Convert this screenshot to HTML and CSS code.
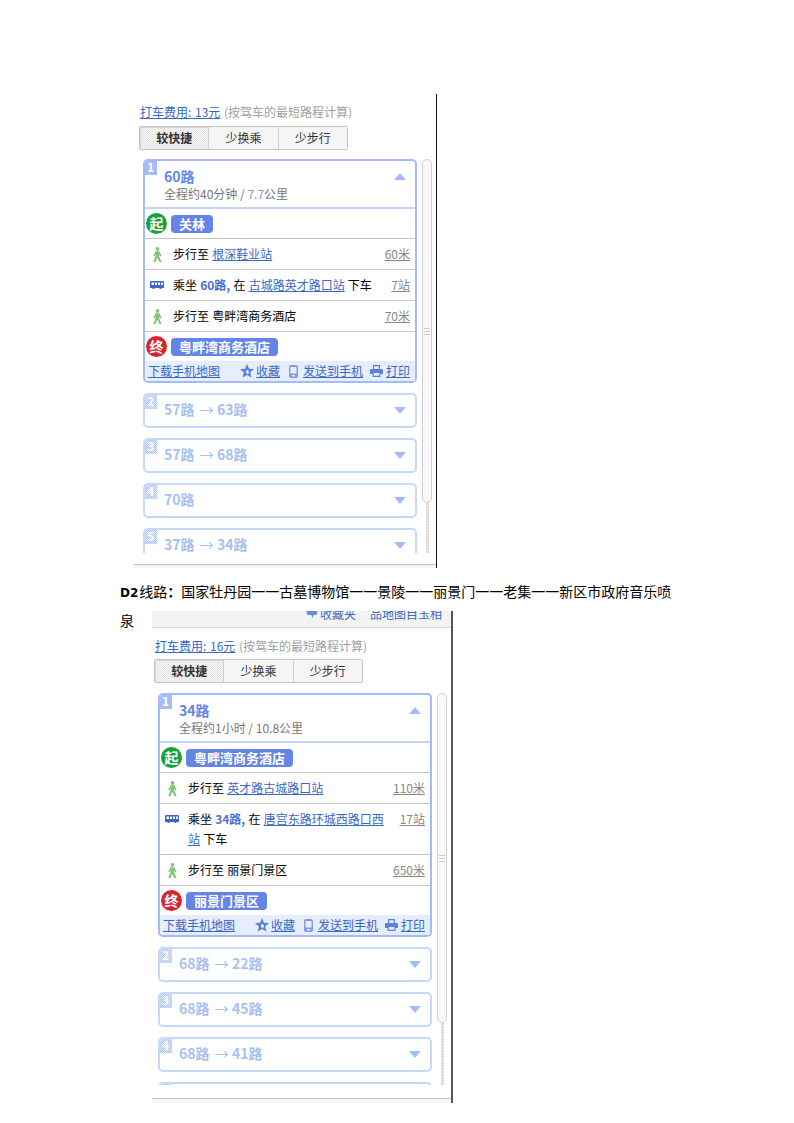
FILE: index.html
```html
<!DOCTYPE html>
<html lang="zh">
<head>
<meta charset="utf-8">
<title>公交线路</title>
<link rel="stylesheet" href="styles.css">
</head>
<body>
<svg class="defs" aria-hidden="true">
  <symbol id="walk" viewBox="0 0 12 16"><circle cx="6.5" cy="2" r="2"/><path d="M4.5 4.500h4l2.500 5-1.400.6L8.400 8v2.500L11 16H8.600L6.400 11.500 4.200 16H2l2.400-6V7.500L3.400 10 2 9.400z"/></symbol>
  <symbol id="bus" viewBox="0 0 14 9"><path fill-rule="evenodd" d="M1 0h12a1 1 0 0 1 1 1v6h-2.100a1.500 1.500 0 0 1-2.800 0H4.900a1.500 1.500 0 0 1-2.800 0H0V1a1 1 0 0 1 1-1zM1.500 1.500v2.500h2.500V1.500zM5 1.500v2.500h2V1.500zM8 1.500v2.500h2V1.500zM11 1.500v2.500h1.800V1.500z"/></symbol>
  <symbol id="star" viewBox="0 0 14 14"><path fill-rule="evenodd" d="M7 0l2 4.700 5 .4-3.800 3.300L11.400 13.500 7 10.900 2.600 13.500 3.800 8.400 0 5.100l5-.4zM7 5.500L5.800 8l1.200 2 1.600-.6L9 7.500z"/></symbol>
  <symbol id="phone" viewBox="0 0 9 13"><path fill-rule="evenodd" d="M2 0h5a2 2 0 0 1 2 2v9a2 2 0 0 1-2 2H2a2 2 0 0 1-2-2V2a2 2 0 0 1 2-2zM1.500 2v6.500h6V2zM3 10v1.500h3V10z"/></symbol>
  <symbol id="printer" viewBox="0 0 13 12"><path fill-rule="evenodd" d="M3 0h7v4h2a1 1 0 0 1 1 1v4h-2.500v3h-8V9H0V5a1 1 0 0 1 1-1h2zM4.200 1.200V4h4.600V1.200zM3.700 8v2.800h5.600V8z"/></symbol>
</svg>

<section class="panel panel-a">
  <div class="panel-body">
    <p class="fare"><a href="#">打车费用: 13元</a> <span class="fare-note">(按驾车的最短路程计算)</span></p>
    <div class="tabs"><span class="tab is-active">较快捷</span><span class="tab">少换乘</span><span class="tab">少步行</span></div>
    <div class="results">
      <div class="list">
        <article class="card is-open">
          <span class="num">1</span>
          <header class="card-head">
            <div>
              <h3 class="route">60路</h3>
              <p class="sum">全程约40分钟 / <span class="km">7.7</span>公里</p>
            </div>
            <i class="tri-up"></i>
          </header>
          <div class="stop"><span class="dot dot-start">起</span><span class="pill">关林</span></div>
          <div class="step"><span class="ico"><svg class="i-walk"><use href="#walk"/></svg></span><div class="step-main">步行至 <a href="#">根深鞋业站</a></div><a class="dist" href="#">60米</a></div>
          <div class="step"><span class="ico"><svg class="i-bus"><use href="#bus"/></svg></span><div class="step-main">乘坐 <b class="line">60路,</b> 在 <a href="#">古城路英才路口站</a> 下车</div><a class="dist" href="#">7站</a></div>
          <div class="step"><span class="ico"><svg class="i-walk"><use href="#walk"/></svg></span><div class="step-main">步行至 粤畔湾商务酒店</div><a class="dist" href="#">70米</a></div>
          <div class="stop stop-end"><span class="dot dot-end">终</span><span class="pill">粤畔湾商务酒店</span></div>
          <footer class="tools">
            <a href="#">下载手机地图</a>
            <span class="tool-group">
              <span class="tool"><svg class="i-star"><use href="#star"/></svg><a href="#">收藏</a></span>
              <span class="tool"><svg class="i-phone"><use href="#phone"/></svg><a href="#">发送到手机</a></span>
              <span class="tool"><svg class="i-printer"><use href="#printer"/></svg><a href="#">打印</a></span>
            </span>
          </footer>
        </article>
        <article class="card"><span class="num">2</span><h3 class="route">57路 <span class="arrow">→</span> 63路</h3><i class="tri-down"></i></article>
        <article class="card"><span class="num">3</span><h3 class="route">57路 <span class="arrow">→</span> 68路</h3><i class="tri-down"></i></article>
        <article class="card"><span class="num">4</span><h3 class="route">70路</h3><i class="tri-down"></i></article>
        <article class="card"><span class="num">5</span><h3 class="route">37路 <span class="arrow">→</span> 34路</h3><i class="tri-down"></i></article>
      </div>
      <div class="scroll"><div class="thumb"><i class="grip"></i></div><div class="track"></div></div>
    </div>
  </div>
  <div class="panel-foot"></div>
</section>

<p class="line-title"><b class="code">D2</b>线路<span class="colon">：</span>国家牡丹园一一古墓博物馆一一景陵一一丽景门一一老集一一新区市政府音乐喷泉</p>

<section class="panel panel-b">
  <div class="panel-head">
    <span class="head-link"><svg class="i-fav" viewBox="0 0 12 8"><path d="M0 0h12l-1.500 5H8L6 8 5.500 5h-4z"/></svg>收藏夹</span>
    <span class="head-link">品地图目玉相</span>
  </div>
  <div class="panel-body">
    <p class="fare"><a href="#">打车费用: 16元</a> <span class="fare-note">(按驾车的最短路程计算)</span></p>
    <div class="tabs"><span class="tab is-active">较快捷</span><span class="tab">少换乘</span><span class="tab">少步行</span></div>
    <div class="results">
      <div class="list">
        <article class="card is-open">
          <span class="num">1</span>
          <header class="card-head">
            <div>
              <h3 class="route">34路</h3>
              <p class="sum">全程约1小时 / 10.8公里</p>
            </div>
            <i class="tri-up"></i>
          </header>
          <div class="stop"><span class="dot dot-start">起</span><span class="pill">粤畔湾商务酒店</span></div>
          <div class="step"><span class="ico"><svg class="i-walk"><use href="#walk"/></svg></span><div class="step-main">步行至 <a href="#">英才路古城路口站</a></div><a class="dist" href="#">110米</a></div>
          <div class="step"><span class="ico"><svg class="i-bus"><use href="#bus"/></svg></span><div class="step-main">乘坐 <b class="line">34路,</b> 在 <a href="#">唐宫东路环城西路口西站</a> 下车</div><a class="dist" href="#">17站</a></div>
          <div class="step"><span class="ico"><svg class="i-walk"><use href="#walk"/></svg></span><div class="step-main">步行至 丽景门景区</div><a class="dist" href="#">650米</a></div>
          <div class="stop stop-end"><span class="dot dot-end">终</span><span class="pill">丽景门景区</span></div>
          <footer class="tools">
            <a href="#">下载手机地图</a>
            <span class="tool-group">
              <span class="tool"><svg class="i-star"><use href="#star"/></svg><a href="#">收藏</a></span>
              <span class="tool"><svg class="i-phone"><use href="#phone"/></svg><a href="#">发送到手机</a></span>
              <span class="tool"><svg class="i-printer"><use href="#printer"/></svg><a href="#">打印</a></span>
            </span>
          </footer>
        </article>
        <article class="card"><span class="num">2</span><h3 class="route">68路 <span class="arrow">→</span> 22路</h3><i class="tri-down"></i></article>
        <article class="card"><span class="num">3</span><h3 class="route">68路 <span class="arrow">→</span> 45路</h3><i class="tri-down"></i></article>
        <article class="card"><span class="num">4</span><h3 class="route">68路 <span class="arrow">→</span> 41路</h3><i class="tri-down"></i></article>
        <article class="card"><span class="num">5</span></article>
      </div>
      <div class="scroll"><div class="thumb"><i class="grip"></i></div><div class="track"></div></div>
    </div>
  </div>
  <div class="panel-foot"></div>
</section>
</body>
</html>
```
FILE: styles.css
```css
* { box-sizing: border-box; }
html, body { margin: 0; background: #fff; }
body {
  padding-top: 94px;
  font: 12px/20px "Noto Sans CJK SC", "Liberation Sans", sans-serif;
  color: #000;
}
h3, p { margin: 0; }
a { color: #3a68c6; text-decoration: underline; }
.defs { display: none; }

/* panels */
.panel { display: flex; flex-direction: column; overflow: hidden; }
.panel-a { margin-left: 134px; width: 303px; height: 474px; border-right: 1px solid #111; }
.panel-b { margin-left: 152px; width: 301px; height: 492px; border-right: 2px solid #555; }
.panel-body { padding-top: 10px; }
.panel-b .panel-body { margin-left: -3px; }
.panel-a .results { height: 394px; }
.panel-b .results { height: 392px; margin-top: 10px; }
.panel-b .tabs { margin-top: 5px; }
.panel-foot {
  margin-top: auto;
  height: 5px;
  border-top: 1px solid #c4c4c4;
  background: #f6f6f6;
}
.panel-a .panel-foot { height: 4px; }

.panel-head {
  height: 17px;
  flex: none;
  display: flex;
  justify-content: flex-end;
  align-items: flex-end;
  gap: 14px;
  padding: 0 9px 7px 0;
  overflow: hidden;
  background: conic-gradient(#efefef 25%, #f7f7f7 0 50%, #efefef 0 75%, #f7f7f7 0) 0 0 / 2px 2px;
  border-bottom: 1px solid #dcdcdc;
  color: #3a68c6;
}
.head-link { display: inline-flex; align-items: center; line-height: 12px; height: 12px; flex: none; }
.i-fav { width: 12px; height: 8px; margin-right: 2px; fill: #6a8ce0; }

/* fare */
.fare { padding-left: 6px; line-height: 16px; height: 16px; white-space: nowrap; word-spacing: 1px; }
.fare-note { color: #a0a0a0; }

/* tabs */
.tabs {
  display: flex;
  width: 209px;
  height: 24px;
  margin: 6px 0 0 5px;
  border: 1px solid #c4c4c4;
  border-radius: 2px;
}
.tab {
  flex: 1;
  text-align: center;
  line-height: 22px;
  color: #333;
  background: conic-gradient(#f1f1f1 25%, #fafafa 0 50%, #f1f1f1 0 75%, #fafafa 0) 0 0 / 2px 2px;
  border-left: 1px solid #d0d0d0;
}
.tab:first-child { border-left: 0; }
.tab.is-active {
  font-weight: 700;
  background: conic-gradient(#e4e4e4 25%, #f6f6f6 0 50%, #e4e4e4 0 75%, #f6f6f6 0) 0 0 / 2px 2px;
  box-shadow: inset 1px 1px 0 #d8d8d8;
}

/* results */
.results { display: flex; margin-top: 9px; margin-left: 9px; overflow: hidden; }
.list { width: 274px; flex: none; display: flex; flex-direction: column; gap: 10px; }
.card {
  position: relative;
  flex: none;
  height: 35px;
  border: 2px solid #c6d8fb;
  border-radius: 5px;
  overflow: hidden;
  display: flex;
  align-items: center;
  padding: 0 9px 0 19px;
  justify-content: space-between;
}
.card .route { color: #a9bfef; margin-bottom: 3px; }
.route { font-size: 14px; line-height: 18px; font-weight: 700; color: #6485e6; }
.arrow { font-weight: 400; margin-left: 2px; }
.num {
  position: absolute;
  left: -1px;
  top: -1px;
  width: 13px;
  height: 15px;
  line-height: 14px;
  text-align: center;
  font-weight: 700;
  color: #fff;
  background: conic-gradient(#b0c6f7 25%, #dbe6fd 0 50%, #b0c6f7 0 75%, #dbe6fd 0) 0 0 / 2px 2px;
}
.tri-up, .tri-down { width: 0; height: 0; border-left: 6px solid transparent; border-right: 6px solid transparent; }
.tri-up { border-bottom: 7px solid #a4bbf9; }
.tri-down { border-top: 7px solid #a4bbf9; }

.card.is-open {
  height: auto;
  display: block;
  padding: 0;
  border-color: #a3bbf9;
}
.is-open .route { color: #6485e6; margin-bottom: 0; }
.is-open .num { background: #a5bcf9; }
.card-head {
  height: 48px;
  padding: 6px 9px 0 19px;
  border-bottom: 2px solid #c5d6fb;
  display: flex;
  justify-content: space-between;
  align-items: flex-start;
}
.card-head .tri-up { margin-top: 6px; }
.sum { color: #777; line-height: 18px; }
.km { color: #8097dc; }

.stop { height: 29px; display: flex; align-items: center; gap: 4px; padding-left: 1px; }
.stop-end { height: 30px; border-top: 1px solid #c6c6c6; }
.dot {
  width: 21px;
  height: 21px;
  border-radius: 50%;
  text-align: center;
  line-height: 20px;
  font-size: 14px;
  font-weight: 700;
  color: #fff;
}
.dot-start { background: #17a138; }
.dot-end { background: #d8242f; }
.pill {
  height: 18px;
  line-height: 18px;
  padding: 0 8px;
  border-radius: 4px;
  background: #6485e6;
  color: #fff;
  font-size: 13px;
  font-weight: 700;
  white-space: nowrap;
}

.step {
  display: flex;
  padding: 5px 5px 5px 0;
  border-top: 1px solid #c6c6c6;
  min-height: 31px;
}
.ico { width: 28px; height: 20px; flex: none; display: flex; align-items: center; justify-content: center; padding-right: 5px; }
.i-walk { width: 12px; height: 15px; fill: #7fc47a; }
.i-bus { width: 14px; height: 9px; fill: #3f66c8; }
.step-main { width: 200px; flex: none; word-spacing: .5px; }
.line { color: #4a72d4; }
.dist { margin-left: auto; color: #888; white-space: nowrap; }

.tools {
  height: 20px;
  display: flex;
  align-items: center;
  padding: 0 5px 0 3px;
  background: #e6edfd;
  white-space: nowrap;
}
.tool-group { margin-left: auto; display: flex; gap: 7px; }
.tool { display: inline-flex; align-items: center; gap: 2px; }
.i-star { width: 14px; height: 14px; fill: #5c7fdc; }
.i-phone { width: 9px; height: 13px; margin: 0 3px 0 2px; fill: #7d9be6; }
.i-printer { width: 13px; height: 12px; margin-right: 1px; fill: #5c7fdc; }

/* scrollbar */
.scroll { width: 10px; margin-left: 5px; flex: none; display: flex; flex-direction: column; align-items: center; }
.thumb {
  width: 10px;
  flex: none;
  display: flex;
  align-items: center;
  justify-content: center;
  border: 1px solid #cfcfcf;
  border-radius: 5px;
  background: #f9f9f9;
}
.panel-a .thumb { height: 344px; }
.panel-b .thumb { height: 330px; }
.grip { width: 6px; height: 7px; border-top: 1px solid #ccc; border-bottom: 1px solid #ccc; background: linear-gradient(#ccc, #ccc) 0 2px / 100% 1px no-repeat; }
.track { flex: 1; width: 3px; background: repeating-linear-gradient(#ddd9d6 0 2px, #efedeb 2px 3px); }

/* heading between panels */
.line-title {
  width: 560px;
  height: 43px;
  margin-left: 120px;
  padding-top: 10px;
  font-size: 14px;
  line-height: 27px;
}
.code { font-family: "DejaVu Sans", sans-serif; font-size: 12px; margin-right: 1px; }
.colon { font-family: "Noto Sans CJK TC", sans-serif; font-weight: 700; }
```
